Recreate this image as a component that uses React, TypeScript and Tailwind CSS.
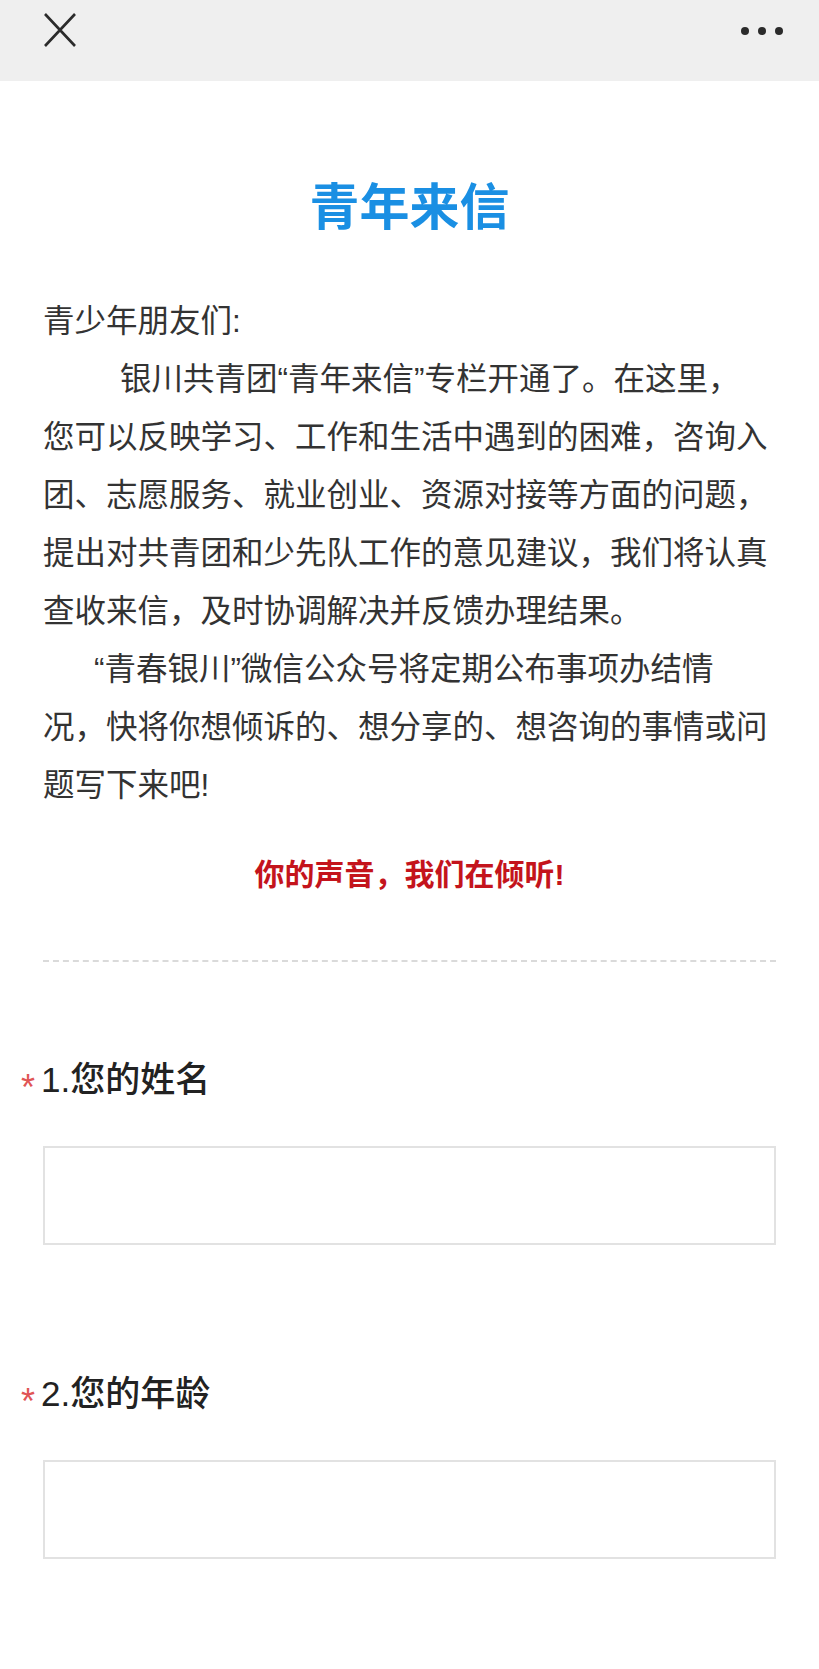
const font = 'font-["Liberation_Sans","Noto_Sans_CJK_SC",sans-serif]';

function TopBar() {
  return (
    <div className="h-[81px] bg-[#efefef] flex items-start justify-between pl-[44px] pr-[36px]">
      <svg width="32" height="34" viewBox="0 0 32 34" className="mt-[13px]">
        <path d="M1 1 L31 33 M31 1 L1 33" stroke="#2b2b2b" strokeWidth="2.6" fill="none" />
      </svg>
      <div className="mt-[27px] flex gap-[9px]">
        <span className="w-[8px] h-[8px] rounded-full bg-[#2b2b2b]" />
        <span className="w-[8px] h-[8px] rounded-full bg-[#2b2b2b]" />
        <span className="w-[8px] h-[8px] rounded-full bg-[#2b2b2b]" />
      </div>
    </div>
  );
}

function Field({ index, label }: { index: number; label: string }) {
  return (
    <div>
      <div className="flex items-center pl-[21px] h-[40px] text-[35px] leading-[40px] font-medium text-[#222]">
        <span className="w-[20px] text-[36px] leading-none text-[#e05555] translate-y-[8px]">*</span>
        <span>
          {index}.{label}
        </span>
      </div>
      <div className="mx-[43px] mt-[46px] h-[99px] border-2 border-[#e2e2e2] bg-white" />
    </div>
  );
}

export default function App() {
  return (
    <div className={`min-h-[1669px] bg-white ${font}`}>
      <TopBar />

      <h1 className="mt-[102px] text-center text-[50px] leading-[50px] font-bold text-[#1a8fe3]">
        青年来信
      </h1>

      <div className="mt-[59px] pl-[43px] pr-[50px] text-[31.5px] leading-[58px] text-[#333]">
        <p>青少年朋友们:</p>
        <p className="indent-[77px]">
          银川共青团“青年来信”专栏开通了。在这里，您可以反映学习、工作和生活中遇到的困难，咨询入团、志愿服务、就业创业、资源对接等方面的问题，提出对共青团和少先队工作的意见建议，我们将认真查收来信，及时协调解决并反馈办理结果。
        </p>
        <p className="indent-[51px]">
          “青春银川”微信公众号将定期公布事项办结情况，快将你想倾诉的、想分享的、想咨询的事情或问题写下来吧!
        </p>
      </div>

      <p className="mt-[46px] text-center text-[30px] leading-[30px] font-bold text-[#c4141c]">
        你的声音，我们在倾听!
      </p>

      <div className="mt-[70px] mx-[43px] border-t-2 border-dashed border-[#dadada]" />

      <div className="mt-[98px]">
        <Field index={1} label="您的姓名" />
      </div>
      <div className="mt-[129px]">
        <Field index={2} label="您的年龄" />
      </div>
    </div>
  );
}
